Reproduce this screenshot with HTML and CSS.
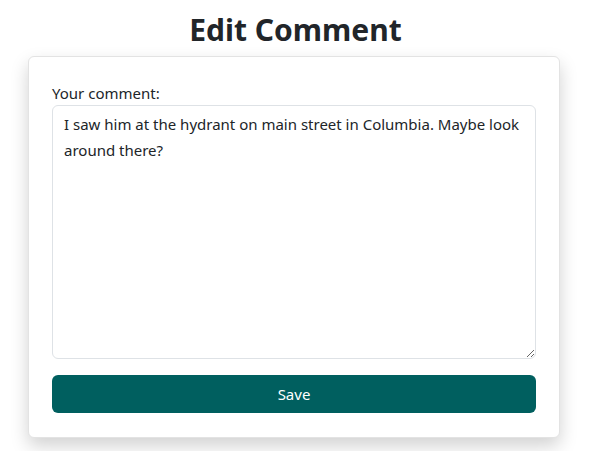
FILE: index.html
```html
<!DOCTYPE html>
<html lang="en">
<head>
<meta charset="utf-8">
<title>Edit Comment</title>
<link rel="stylesheet" href="styles.css">
</head>
<body>
<main class="page">
  <h1 class="title">Edit Comment</h1>
  <form class="card">
    <label class="label" for="comment">Your comment:</label>
    <textarea class="input" id="comment">I saw him at the hydrant on main street in Columbia. Maybe look around there?</textarea>
    <button class="btn" type="button">Save</button>
  </form>
</main>
</body>
</html>
```

FILE: styles.css
```css
* { box-sizing: border-box; }
html, body { margin: 0; background: #fff; }
body {
  font-family: "Noto Sans", "Open Sans", sans-serif;
  color: #212529;
  font-size: 16px;
  min-height: 451px;
}
.page {
  display: flex;
  flex-direction: column;
  align-items: center;
  padding-top: 12px;
}
.title {
  margin: 0 0 8px;
  font-size: 30px;
  font-weight: 700;
  line-height: 36px;
  color: #212529;
}
.card {
  width: 532px;
  margin-left: -3px;
  background: #fff;
  border: 1px solid #e3e3e3;
  border-radius: 6px;
  box-shadow: 0 8px 18px rgba(0,0,0,0.18);
  padding: 26px 23px 24px;
  display: flex;
  flex-direction: column;
}
.label {
  font-size: 15px;
  line-height: 20px;
  margin-bottom: 2px;
}
.input {
  height: 254px;
  width: 100%;
  border: 1px solid #dee2e6;
  border-radius: 6px;
  padding: 5px 11px;
  font-family: inherit;
  font-size: 15px;
  line-height: 26px;
  color: #212529;
  resize: vertical;
  outline: none;
}
.btn {
  margin-top: 16px;
  height: 38px;
  width: 100%;
  border: 0;
  border-radius: 6px;
  background: #005f5f;
  color: #fff;
  font-family: inherit;
  font-size: 15px;
}
```
